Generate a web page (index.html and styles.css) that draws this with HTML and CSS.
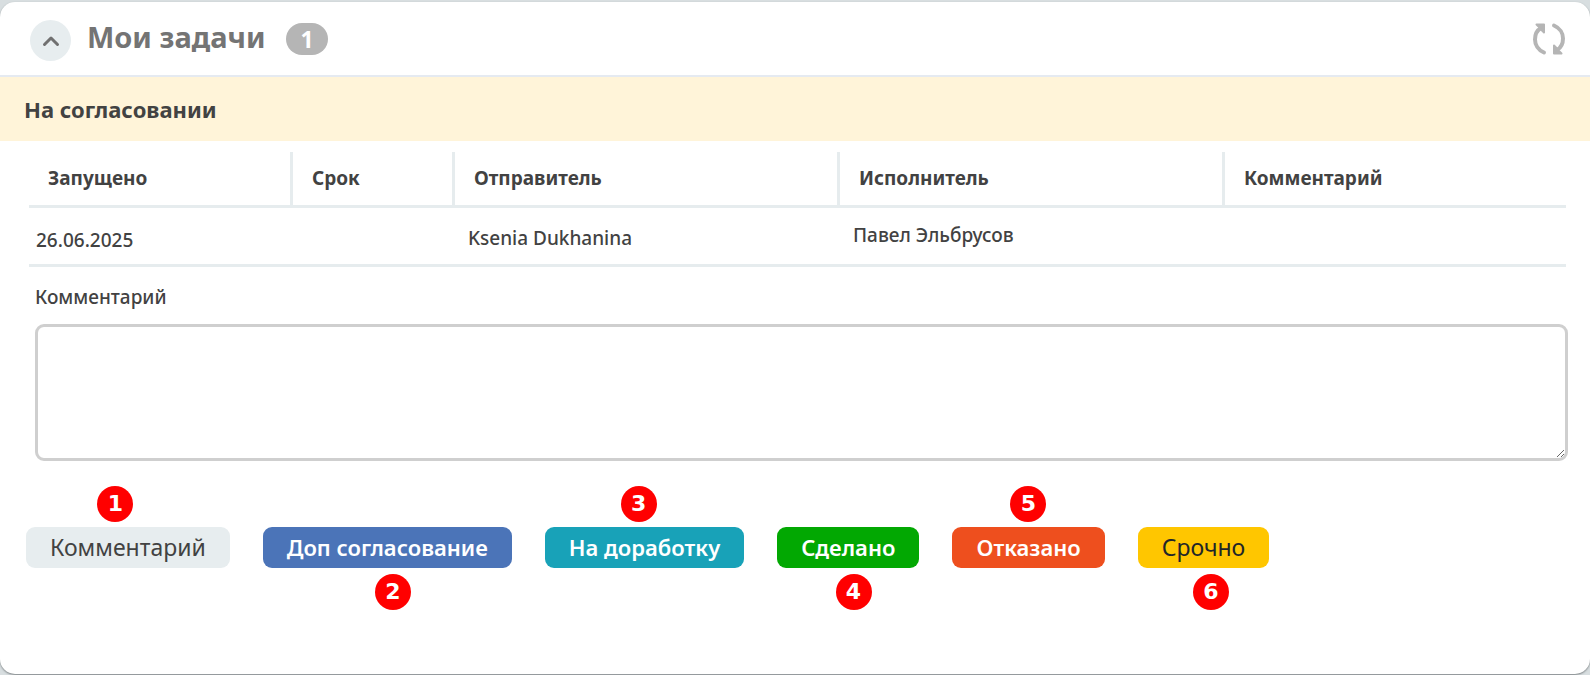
FILE: index.html
```html
<!DOCTYPE html>
<html lang="ru">
<head>
<meta charset="utf-8">
<title>Мои задачи</title>
<link rel="stylesheet" href="styles.css">
</head>
<body>
<main class="card">
  <header class="card-header">
    <button class="toggle" type="button" aria-label="Свернуть">
      <svg width="18" height="12" viewBox="0 0 18 12" fill="none" stroke="#707070" stroke-width="3" stroke-linecap="round" stroke-linejoin="round"><path d="M2.5 9.5 9 3l6.500 6.500"/></svg>
    </button>
    <h1 class="title">Мои задачи</h1>
    <span class="count">1</span>
    <button class="refresh" type="button" aria-label="Обновить">
      <svg width="34" height="34" viewBox="0 0 34 34" fill="none" stroke="#b5b5b5" stroke-width="4" stroke-linecap="round" stroke-linejoin="round"><path d="M12 30.500C6 28 3 22.500 3 17.500 3 12 5.500 8 9 6"/><path d="M22 3.500C28 6 31 11.500 31 16.500 31 22 28.500 26 25 28"/><path fill="#b5b5b5" stroke-width="2" d="M4.500 2.500H12v8L9.500 8 7 5zM29.500 31.500H22v-8l2.500 2.500 2.500 3z"/></svg>
    </button>
  </header>
  <h2 class="stage">На согласовании</h2>
  <div class="content">
    <table class="tasks">
      <colgroup><col class="col-start"><col class="col-due"><col class="col-person"><col class="col-person"><col></colgroup>
      <thead>
        <tr><th>Запущено</th><th>Срок</th><th>Отправитель</th><th>Исполнитель</th><th>Комментарий</th></tr>
      </thead>
      <tbody>
        <tr><td class="started">26.06.2025</td><td></td><td class="sender">Ksenia Dukhanina</td><td class="assignee">Павел Эльбрусов</td><td></td></tr>
      </tbody>
    </table>
    <div class="field">
      <label for="comment">Комментарий</label>
      <textarea id="comment"></textarea>
    </div>
  </div>
  <div class="actions">
    <div class="action"><button class="btn btn-comment" type="button">Комментарий</button><span class="mark above mark-1">1</span></div>
    <div class="action"><button class="btn btn-extra" type="button">Доп согласование</button><span class="mark below mark-2">2</span></div>
    <div class="action"><button class="btn btn-rework" type="button">На доработку</button><span class="mark above mark-3">3</span></div>
    <div class="action"><button class="btn btn-done" type="button">Сделано</button><span class="mark below mark-4">4</span></div>
    <div class="action"><button class="btn btn-reject" type="button">Отказано</button><span class="mark above mark-5">5</span></div>
    <div class="action"><button class="btn btn-urgent" type="button">Срочно</button><span class="mark below mark-6">6</span></div>
  </div>
</main>
</body>
</html>
```
FILE: styles.css
```css
* { box-sizing: border-box; }

body {
  margin: 0;
  padding: 2px 0 1px;
  min-height: 100vh;
  display: flex;
  flex-direction: column;
  background: #d8dee0;
  color: #424242;
  font-family: "Noto Sans", sans-serif;
  font-size: 19px;
  line-height: 26px;
  font-weight: 500;
}

button { font-family: inherit; border: 0; cursor: pointer; }

.card {
  flex: 1;
  background: #fff;
  border-radius: 15px;
  box-shadow: 0 1px 2px #7d8385;
  overflow: hidden;
}

.card-header {
  display: flex;
  align-items: center;
  padding: 18px 24px 14px 30px;
  border-bottom: 2px solid #e5eaf1;
}

.toggle {
  display: grid;
  place-items: center;
  width: 41px;
  height: 41px;
  padding: 0;
  border-radius: 50%;
  background: #e7edef;
}

.title {
  margin: 0 21px 0 16px;
  padding-bottom: 7px;
  color: #747474;
  font-size: 29px;
  line-height: 32px;
  font-weight: 700;
}

.count {
  margin-bottom: 4px;
  padding: 0 14px;
  border-radius: 16px;
  background: #b5b5b5;
  color: #fff;
  font-size: 23px;
  line-height: 32px;
  font-weight: 700;
}

.refresh {
  display: grid;
  margin: 0 0 4px auto;
  padding: 0;
  background: none;
}

.stage {
  margin: 0;
  padding: 16px 24px;
  background: #fff4d9;
  font-size: 22px;
  line-height: 32px;
  font-weight: 700;
}

.content { padding: 11px 22px 0 29px; }

.tasks {
  width: calc(100% - 2px);
  table-layout: fixed;
  border-collapse: separate;
  border-spacing: 0;
}

.col-start { width: 264px; }
.col-due { width: 162px; }
.col-person { width: 385px; }

.tasks th {
  padding: 13px 19px 14px;
  border-right: 3px solid #e6ecee;
  border-bottom: 3px solid #e6ecee;
  font-weight: 700;
  text-align: left;
}

.tasks th:last-child { border-right: 0; }

.tasks td {
  height: 59px;
  padding: 14px 13px 11px;
  border-bottom: 3px solid #e6ecee;
}

.tasks .started { padding-left: 7px; vertical-align: bottom; }
.tasks .sender { vertical-align: middle; }
.tasks .assignee { vertical-align: top; }

.field {
  display: flex;
  flex-direction: column;
  gap: 14px;
  padding: 17px 0 0 6px;
}

.field textarea {
  height: 137px;
  padding: 8px;
  border: 3px solid #cfcfcf;
  border-radius: 9px;
  background: #fff;
  color: inherit;
  font: inherit;
  resize: vertical;
}

.actions {
  display: flex;
  flex-wrap: wrap;
  gap: 33px;
  padding: 66px 26px 104px;
}

.action { position: relative; }

.btn {
  padding: 5px 24px 6px;
  border-radius: 9px;
  color: #fff;
  font-size: 22px;
  line-height: 30px;
  font-weight: 600;
}

.btn-comment,
.btn-urgent { font-size: 23px; font-weight: 400; }

.btn-comment { background: #e7edef; color: #424242; }
.btn-extra { background: #4b74b8; }
.btn-rework { background: #18a2b8; }
.btn-done { background: #02a802; }
.btn-reject { background: #ee4f1e; }
.btn-urgent { background: #ffc600; color: #212529; }

.mark {
  position: absolute;
  width: 36px;
  height: 36px;
  border-radius: 50%;
  background: #f00;
  color: #fff;
  font-family: "DejaVu Sans", sans-serif;
  font-size: 22px;
  line-height: 36px;
  font-weight: 700;
  text-align: center;
}

.above { bottom: calc(100% + 5px); }
.below { top: calc(100% + 6px); }
.mark-1 { left: 35%; }
.mark-2 { left: 45%; }
.mark-3 { left: 38%; }
.mark-4 { left: 41%; }
.mark-5 { left: 38%; }
.mark-6 { left: 42%; }
```
